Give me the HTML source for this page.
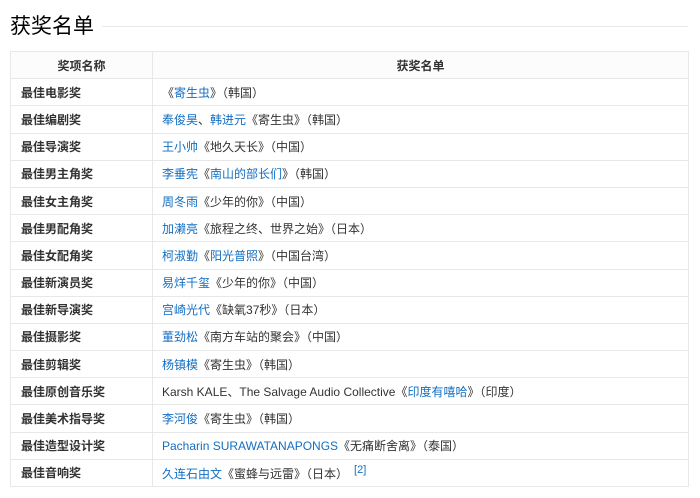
<!DOCTYPE html>
<html><head><meta charset="utf-8"><style>
body{margin:0;background:#fff;font-family:"Liberation Sans","Noto Sans CJK SC",sans-serif;font-size:12px;color:#333}
.t{position:absolute;left:10px;top:11px;font-size:21px;color:#000;line-height:32px}
.ln{position:absolute;left:102px;right:12px;top:26px;border-top:1px solid #e8e8e8}
table{position:absolute;left:10px;top:51px;width:679px;border-collapse:collapse}
td,th{border:1px solid #e8e8e8;height:26.2px;padding:0 9px;text-align:left;font-weight:normal}
th{font-weight:bold;text-align:center;background:#fcfcfc}
td:first-child{width:122px;font-weight:bold;padding-left:10px}
a{color:#136ec2;text-decoration:none}
sup{color:#136ec2;font-size:11px;margin-left:6px}
</style></head><body>
<div class="t">获奖名单</div><div class="ln"></div>
<table>
<tr><th style="width:122px">奖项名称</th><th>获奖名单</th></tr>
<tr><td>最佳电影奖</td><td>《<a>寄生虫</a>》（韩国）</td></tr>
<tr><td>最佳编剧奖</td><td><a>奉俊昊</a>、<a>韩进元</a>《寄生虫》（韩国）</td></tr>
<tr><td>最佳导演奖</td><td><a>王小帅</a>《地久天长》（中国）</td></tr>
<tr><td>最佳男主角奖</td><td><a>李垂宪</a>《<a>南山的部长们</a>》（韩国）</td></tr>
<tr><td>最佳女主角奖</td><td><a>周冬雨</a>《少年的你》（中国）</td></tr>
<tr><td>最佳男配角奖</td><td><a>加濑亮</a>《旅程之终、世界之始》（日本）</td></tr>
<tr><td>最佳女配角奖</td><td><a>柯淑勤</a>《<a>阳光普照</a>》（中国台湾）</td></tr>
<tr><td>最佳新演员奖</td><td><a>易烊千玺</a>《少年的你》（中国）</td></tr>
<tr><td>最佳新导演奖</td><td><a>宫崎光代</a>《缺氧37秒》（日本）</td></tr>
<tr><td>最佳摄影奖</td><td><a>董劲松</a>《南方车站的聚会》（中国）</td></tr>
<tr><td>最佳剪辑奖</td><td><a>杨镇模</a>《寄生虫》（韩国）</td></tr>
<tr><td>最佳原创音乐奖</td><td>Karsh KALE、The Salvage Audio Collective《<a>印度有嘻哈</a>》（印度）</td></tr>
<tr><td>最佳美术指导奖</td><td><a>李河俊</a>《寄生虫》（韩国）</td></tr>
<tr><td>最佳造型设计奖</td><td><a>Pacharin SURAWATANAPONGS</a>《无痛断舍离》（泰国）</td></tr>
<tr><td>最佳音响奖</td><td><a>久连石由文</a>《蜜蜂与远雷》（日本）<sup>[2]</sup></td></tr>
</table>
</body></html>
